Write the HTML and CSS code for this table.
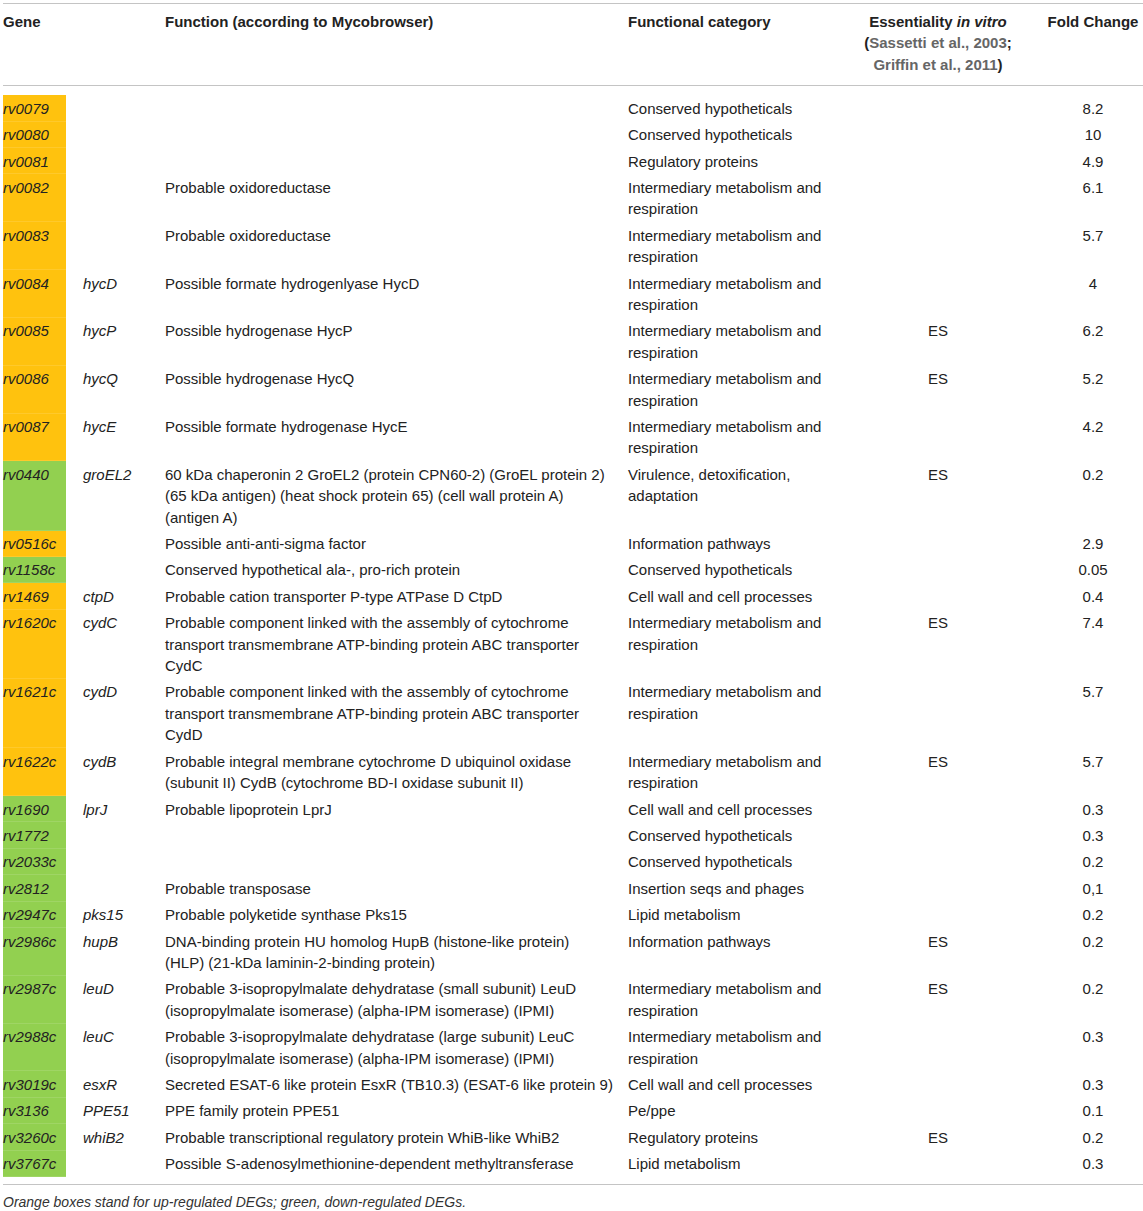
FILE: index.html
```html
<!DOCTYPE html>
<html lang="en">
<head>
    <meta charset="UTF-8">
    <meta name="viewport" content="width=device-width, initial-scale=1.0">
    <title>Differentially expressed genes</title>
    <link rel="stylesheet" href="styles.css">
</head>
<body>
    <div class="table-wrap">
        <table class="deg-table">
            <colgroup>
                <col class="c-gene">
                <col class="c-sym">
                <col class="c-func">
                <col class="c-cat">
                <col class="c-ess">
                <col class="c-fold">
            </colgroup>
            <thead>
                <tr>
                    <th>Gene</th>
                    <th></th>
                    <th>Function (according to Mycobrowser)</th>
                    <th>Functional category</th>
                    <th class="center">Essentiality <i>in vitro</i><br>(<span class="ref">Sassetti et al., 2003</span>;<br><span class="ref">Griffin et al., 2011</span>)</th>
                    <th class="center">Fold Change</th>
                </tr>
            </thead>
            <tbody>
                <tr><td class="gene up">rv0079</td><td class="sym"></td><td></td><td>Conserved hypotheticals</td><td class="center"></td><td class="center">8.2</td></tr>
                <tr><td class="gene up">rv0080</td><td class="sym"></td><td></td><td>Conserved hypotheticals</td><td class="center"></td><td class="center">10</td></tr>
                <tr><td class="gene up">rv0081</td><td class="sym"></td><td></td><td>Regulatory proteins</td><td class="center"></td><td class="center">4.9</td></tr>
                <tr><td class="gene up">rv0082</td><td class="sym"></td><td>Probable oxidoreductase</td><td>Intermediary metabolism and respiration</td><td class="center"></td><td class="center">6.1</td></tr>
                <tr><td class="gene up">rv0083</td><td class="sym"></td><td>Probable oxidoreductase</td><td>Intermediary metabolism and respiration</td><td class="center"></td><td class="center">5.7</td></tr>
                <tr><td class="gene up">rv0084</td><td class="sym">hycD</td><td>Possible formate hydrogenlyase HycD</td><td>Intermediary metabolism and respiration</td><td class="center"></td><td class="center">4</td></tr>
                <tr><td class="gene up">rv0085</td><td class="sym">hycP</td><td>Possible hydrogenase HycP</td><td>Intermediary metabolism and respiration</td><td class="center">ES</td><td class="center">6.2</td></tr>
                <tr><td class="gene up">rv0086</td><td class="sym">hycQ</td><td>Possible hydrogenase HycQ</td><td>Intermediary metabolism and respiration</td><td class="center">ES</td><td class="center">5.2</td></tr>
                <tr><td class="gene up">rv0087</td><td class="sym">hycE</td><td>Possible formate hydrogenase HycE</td><td>Intermediary metabolism and respiration</td><td class="center"></td><td class="center">4.2</td></tr>
                <tr><td class="gene down">rv0440</td><td class="sym">groEL2</td><td>60 kDa chaperonin 2 GroEL2 (protein CPN60-2) (GroEL protein 2) (65 kDa antigen) (heat shock protein 65) (cell wall protein A) (antigen A)</td><td>Virulence, detoxification, adaptation</td><td class="center">ES</td><td class="center">0.2</td></tr>
                <tr><td class="gene up">rv0516c</td><td class="sym"></td><td>Possible anti-anti-sigma factor</td><td>Information pathways</td><td class="center"></td><td class="center">2.9</td></tr>
                <tr><td class="gene down">rv1158c</td><td class="sym"></td><td>Conserved hypothetical ala-, pro-rich protein</td><td>Conserved hypotheticals</td><td class="center"></td><td class="center">0.05</td></tr>
                <tr><td class="gene up">rv1469</td><td class="sym">ctpD</td><td>Probable cation transporter P-type ATPase D CtpD</td><td>Cell wall and cell processes</td><td class="center"></td><td class="center">0.4</td></tr>
                <tr><td class="gene up">rv1620c</td><td class="sym">cydC</td><td>Probable component linked with the assembly of cytochrome transport transmembrane ATP-binding protein ABC transporter CydC</td><td>Intermediary metabolism and respiration</td><td class="center">ES</td><td class="center">7.4</td></tr>
                <tr><td class="gene up">rv1621c</td><td class="sym">cydD</td><td>Probable component linked with the assembly of cytochrome transport transmembrane ATP-binding protein ABC transporter CydD</td><td>Intermediary metabolism and respiration</td><td class="center"></td><td class="center">5.7</td></tr>
                <tr><td class="gene up">rv1622c</td><td class="sym">cydB</td><td>Probable integral membrane cytochrome D ubiquinol oxidase (subunit II) CydB (cytochrome BD-I oxidase subunit II)</td><td>Intermediary metabolism and respiration</td><td class="center">ES</td><td class="center">5.7</td></tr>
                <tr><td class="gene down">rv1690</td><td class="sym">lprJ</td><td>Probable lipoprotein LprJ</td><td>Cell wall and cell processes</td><td class="center"></td><td class="center">0.3</td></tr>
                <tr><td class="gene down">rv1772</td><td class="sym"></td><td></td><td>Conserved hypotheticals</td><td class="center"></td><td class="center">0.3</td></tr>
                <tr><td class="gene down">rv2033c</td><td class="sym"></td><td></td><td>Conserved hypotheticals</td><td class="center"></td><td class="center">0.2</td></tr>
                <tr><td class="gene down">rv2812</td><td class="sym"></td><td>Probable transposase</td><td>Insertion seqs and phages</td><td class="center"></td><td class="center">0,1</td></tr>
                <tr><td class="gene down">rv2947c</td><td class="sym">pks15</td><td>Probable polyketide synthase Pks15</td><td>Lipid metabolism</td><td class="center"></td><td class="center">0.2</td></tr>
                <tr><td class="gene down">rv2986c</td><td class="sym">hupB</td><td>DNA-binding protein HU homolog HupB (histone-like protein)<br>(HLP) (21-kDa laminin-2-binding protein)</td><td>Information pathways</td><td class="center">ES</td><td class="center">0.2</td></tr>
                <tr><td class="gene down">rv2987c</td><td class="sym">leuD</td><td>Probable 3-isopropylmalate dehydratase (small subunit) LeuD (isopropylmalate isomerase) (alpha-IPM isomerase) (IPMI)</td><td>Intermediary metabolism and respiration</td><td class="center">ES</td><td class="center">0.2</td></tr>
                <tr><td class="gene down">rv2988c</td><td class="sym">leuC</td><td>Probable 3-isopropylmalate dehydratase (large subunit) LeuC (isopropylmalate isomerase) (alpha-IPM isomerase) (IPMI)</td><td>Intermediary metabolism and respiration</td><td class="center"></td><td class="center">0.3</td></tr>
                <tr><td class="gene down">rv3019c</td><td class="sym">esxR</td><td>Secreted ESAT-6 like protein EsxR (TB10.3) (ESAT-6 like protein 9)</td><td>Cell wall and cell processes</td><td class="center"></td><td class="center">0.3</td></tr>
                <tr><td class="gene down">rv3136</td><td class="sym">PPE51</td><td>PPE family protein PPE51</td><td>Pe/ppe</td><td class="center"></td><td class="center">0.1</td></tr>
                <tr><td class="gene down">rv3260c</td><td class="sym">whiB2</td><td>Probable transcriptional regulatory protein WhiB-like WhiB2</td><td>Regulatory proteins</td><td class="center">ES</td><td class="center">0.2</td></tr>
                <tr><td class="gene down">rv3767c</td><td class="sym"></td><td>Possible S-adenosylmethionine-dependent methyltransferase</td><td>Lipid metabolism</td><td class="center"></td><td class="center">0.3</td></tr>
            </tbody>
        </table>
        <p class="footnote">Orange boxes stand for up-regulated DEGs; green, down-regulated DEGs.</p>
    </div>
</body>
</html>
```

FILE: styles.css
```css
* {
    margin: 0;
    padding: 0;
    box-sizing: border-box;
}

body {
    font-family: "Liberation Sans", Arial, sans-serif;
    font-size: 15px;
    color: #222;
    background-color: #fff;
}

.table-wrap {
    padding: 3px 0 0 3px;
}

.deg-table {
    width: 1140px;
    table-layout: fixed;
    border-collapse: separate;
    border-spacing: 0;
    border-top: 1px solid #c4c4c4;
    border-bottom: 1px solid #c4c4c4;
}

.c-gene { width: 63px; }
.c-sym { width: 99px; }
.c-func { width: 463px; }
.c-cat { width: 230px; }
.c-ess { width: 160px; }
.c-fold { width: 125px; }

th, td {
    text-align: left;
    vertical-align: top;
    line-height: 21.4px;
    padding: 2.5px 12px 2.5px 0;
}

th {
    font-weight: bold;
    color: #222;
    padding-top: 7px;
    padding-bottom: 10px;
    border-bottom: 1px solid #c4c4c4;
}

th .ref {
    color: #666;
}

.center {
    text-align: center;
    padding-right: 0;
}

th:first-child,
td:first-child {
    padding-right: 0;
}

th:nth-child(2),
td:nth-child(2) {
    padding-left: 17px;
}

th:last-child,
td:last-child {
    padding-left: 25px;
}

.gene {
    font-style: italic;
    white-space: nowrap;
    box-shadow: inset 0 -1px 0 rgba(255, 255, 255, 0.12);
    background-clip: padding-box;
}

.gene.up {
    background-color: #ffc20e;
}

.gene.down {
    background-color: #92d050;
}

.sym {
    font-style: italic;
}

/* gaps between the rules and the coloured boxes */
tbody tr:first-child td {
    border-top: 9px solid transparent;
}

tbody tr:last-child td {
    border-bottom: 7px solid transparent;
}

.footnote {
    font-size: 14px;
    font-style: italic;
    line-height: 20px;
    color: #333;
    padding-top: 7px;
}
```
